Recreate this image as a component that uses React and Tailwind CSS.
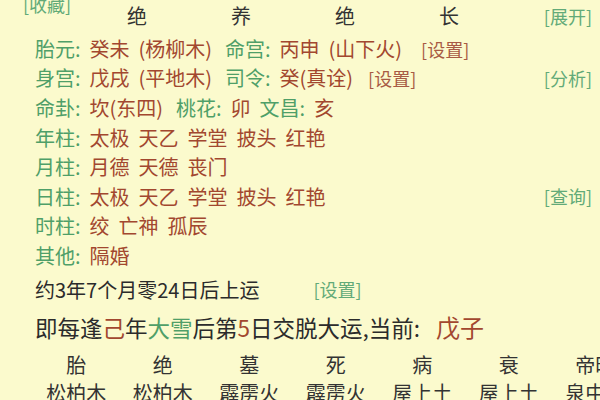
const G = "text-[#4f9f68]";
const R = "text-[#a2472f]";

const Label = ({ children, gap }) => (
  <span className={`${G} ${gap || ""}`}>{children}: </span>
);
const Val = ({ children }) => <span className={R}>{children} </span>;
const Link = ({ children, red }) => (
  <span className={`text-[18px] ${red ? "text-[#a85a44]" : "text-[#62aa78]"}`}>[{children}]</span>
);

const rows = [
  { k: "fy", body: <><Label>胎元</Label><Val>癸未 (杨柳木)</Val><Label gap="ml-[4px]">命宫</Label><Val>丙申 (山下火)</Val><span className="ml-[10px]"><Link red>设置</Link></span></> },
  { k: "sg", body: <><Label>身宫</Label><Val>戊戌 (平地木)</Val><Label gap="ml-[4px]">司令</Label><Val>癸(真诠)</Val><span className="ml-[6px]"><Link red>设置</Link></span></>, right: "分析" },
  { k: "mg", body: <><Label>命卦</Label><Val>坎(东四)</Val><Label gap="ml-[4px]">桃花</Label><Val>卯</Val><Label>文昌</Label><Val>亥</Val></> },
  { k: "nz", body: <><Label>年柱</Label><Val>太极 天乙 学堂 披头 红艳</Val></> },
  { k: "yz", body: <><Label>月柱</Label><Val>月德 天德 丧门</Val></> },
  { k: "rz", body: <><Label>日柱</Label><Val>太极 天乙 学堂 披头 红艳</Val></>, right: "查询" },
  { k: "sz", body: <><Label>时柱</Label><Val>绞 亡神 孤辰</Val></> },
  { k: "qt", body: <><Label>其他</Label><Val>隔婚</Val></> },
];

const stages = ["胎", "绝", "墓", "死", "病", "衰", "帝旺"];
const nayin = ["松柏木", "松柏木", "霹雳火", "霹雳火", "屋上土", "屋上土", "泉中水"];

export default function App() {
  return (
    <div
      className="w-[600px] h-[400px] overflow-hidden bg-[#fbfacd] text-[#2b2b2b] text-[20px] whitespace-nowrap"
      style={{ fontFamily: '"Noto Sans CJK SC", "Noto Sans", sans-serif' }}
    >
      {/* cut-off top line */}
      <div className="h-[8px] pl-[23px]">
        <div className="-mt-[4px] leading-[16px]">
          <Link>收藏</Link>
        </div>
      </div>

      <div className="h-[24px] flex items-center pr-[8px]">
        <div className="flex pl-[85px] leading-[24px] text-[#333]">
          {["绝", "养", "绝", "长"].map((s, i) => (
            <div key={i} className="w-[104px] text-center">{s}</div>
          ))}
        </div>
        <div className="ml-auto">
          <Link>展开</Link>
        </div>
      </div>

      <div className="mt-[6px] pl-[35px] pr-[8px] [word-spacing:4.5px]">
        {rows.map((r) => (
          <div key={r.k} className="h-[29.5px] leading-[29.5px] flex items-center">
            <div>{r.body}</div>
            {r.right && (
              <div className="ml-auto [word-spacing:0px]">
                <Link>{r.right}</Link>
              </div>
            )}
          </div>
        ))}
      </div>

      <div className="mt-[4px] pl-[35px] leading-[29.5px] flex items-center">
        <span>约3年7个月零24日后上运</span>
        <span className="ml-[54px]"><Link>设置</Link></span>
      </div>

      <div className="mt-[6px] pl-[35px] leading-[32px] flex items-center">
        <span className="text-[22.5px]">即每逢<span className={R}>己</span>年<span className={G}>大雪</span>后第<span className={R}>5</span>日交脱大运,当前:</span>
        <span className={`${R} text-[24px] ml-[16px]`}>戊子</span>
      </div>

      <div className="mt-[8px] pl-[33px] flex leading-[28px] text-[#333]">
        {stages.map((s, i) => (
          <div key={i} className="w-[86.5px] shrink-0 text-center">{s}</div>
        ))}
      </div>
      <div className="pl-[33px] flex leading-[28px] text-[#333]">
        {nayin.map((s, i) => (
          <div key={i} className="w-[86.5px] shrink-0 text-center">{s}</div>
        ))}
      </div>
    </div>
  );
}
